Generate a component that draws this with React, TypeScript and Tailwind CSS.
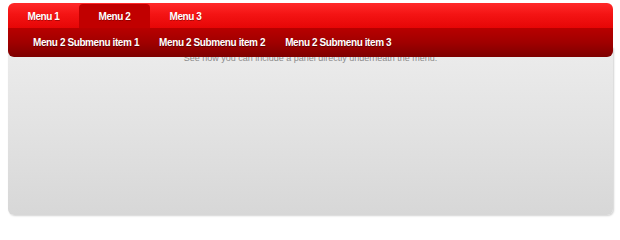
import React from "react";

export default function App() {
  const tabs = ["Menu 1", "Menu 2", "Menu 3"];
  const subs = ["Menu 2 Submenu item 1", "Menu 2 Submenu item 2", "Menu 2 Submenu item 3"];
  return (
    <div
      className="w-[620px] h-[222px] bg-white pt-[3px] px-[8px]"
      style={{ fontFamily: '"Liberation Sans", Arial, sans-serif' }}
    >
      <div className="w-[605px] flex flex-col">
        <div className="relative z-10 rounded-[6px] overflow-hidden">
          <div className="h-[25px] flex items-end bg-[linear-gradient(to_bottom,#ff2a2a_0%,#f41414_45%,#e60606_100%)]">
            {tabs.map((t, i) => (
              <div
                key={t}
                className={
                  "w-[71px] h-[24px] flex items-center justify-center text-white font-bold text-[10px] tracking-[-0.4px] [text-shadow:0_1px_0_rgba(80,0,0,0.45)] rounded-t-[4px] " +
                  (i === 1 ? "bg-[#c10000]" : "")
                }
              >
                {t}
              </div>
            ))}
          </div>
          <div className="h-[29px] flex items-center pl-[15px] bg-[linear-gradient(to_bottom,#b80000_0%,#a00000_50%,#7e0000_100%)]">
            {subs.map((s) => (
              <div
                key={s}
                className="px-[10px] text-white font-bold text-[10px] tracking-[-0.4px] [text-shadow:0_1px_0_rgba(40,0,0,0.5)]"
              >
                {s}
              </div>
            ))}
          </div>
        </div>
        <div className="-mt-[10px] h-[168px] rounded-b-[6px] bg-[linear-gradient(to_bottom,#ececec_0%,#e2e2e2_50%,#d7d7d7_100%)] shadow-[1px_1px_2px_rgba(0,0,0,0.18)] pt-[6px] flex justify-center">
          <div className="text-[9px] text-[#8c8c8c] leading-[11px]">
            See how you can include a panel directly underneath the menu.
          </div>
        </div>
      </div>
    </div>
  );
}
